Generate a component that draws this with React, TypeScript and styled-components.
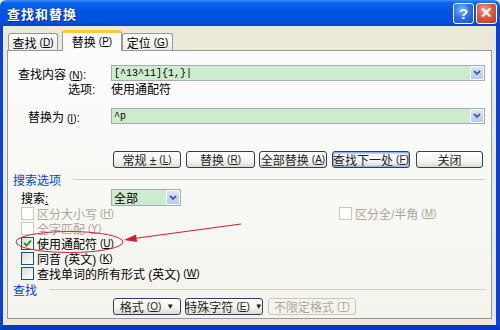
import styled, { createGlobalStyle, css } from "styled-components";

const GlobalStyle = createGlobalStyle`
    html, body {
        margin: 0;
        padding: 0;
        background: #ece9d8;
    }
    body {
        font-family: "Liberation Sans", "Noto Sans CJK SC", sans-serif;
        font-size: 12px;
        color: #000;
    }
    * { box-sizing: border-box; }
`;

const Window = styled.div`
    position: relative;
    width: 500px;
    height: 330px;
    display: flex;
    flex-direction: column;
    background: #ece9d8;
    overflow: hidden;
`;

const TitleBar = styled.div`
    height: 26px;
    display: flex;
    align-items: center;
    padding: 0 3px 0 7px;
    background: linear-gradient(#3d8cf5 0%, #0a62ea 12%, #0054e3 45%, #0050de 85%, #0043c4 100%);
    border-radius: 6px 6px 0 0;
`;

const Title = styled.div`
    flex: 1;
    color: #fff;
    font-weight: bold;
    font-size: 13px;
    letter-spacing: 1px;
    text-shadow: 1px 1px 0 #0a2a8a;
`;

const CaptionButton = styled.div<{ $close?: boolean }>`
    width: 21px;
    height: 21px;
    margin-left: 2px;
    border: 1px solid #fff;
    border-radius: 3px;
    display: flex;
    align-items: center;
    justify-content: center;
    color: #fff;
    font-weight: bold;
    font-size: 15px;
    background: ${p => p.$close
        ? "radial-gradient(circle at 40% 30%, #f0a089 0%, #e0593a 45%, #c1381c 100%)"
        : "radial-gradient(circle at 40% 30%, #7fb1ff 0%, #2f6fea 50%, #1b4fd0 100%)"};
`;

const Frame = styled.div`
    flex: 1;
    display: flex;
    flex-direction: column;
    border-left: 3px solid #0842d8;
    border-right: 4px solid #0842d8;
    border-bottom: 5px solid #0838c0;
    padding: 4px 4px 6px 4px;
`;

const TabStrip = styled.div`
    height: 20px;
    display: flex;
    align-items: flex-end;
    padding-left: 1px;
    position: relative;
    z-index: 1;
`;

const Tab = styled.div<{ $active?: boolean; $w: number }>`
    width: ${p => p.$w}px;
    height: 17px;
    display: flex;
    align-items: center;
    justify-content: center;
    border: 1px solid #919b9c;
    border-bottom: none;
    border-radius: 3px 3px 0 0;
    background: linear-gradient(#fefefe, #ecebe6);
    ${p => p.$active && css`
        height: 21px;
        margin-bottom: -1px;
        margin-left: 4px;
        border-top: 3px solid #ffc83c;
        background: #fcfcfe;
        padding-bottom: 1px;
    `}
`;

const Panel = styled.div`
    flex: 1;
    border: 1px solid #919b9c;
    background: linear-gradient(#fcfcfe 0%, #f9f9f6 40%, #f4f3ee 100%);
    padding: 14px 6px 0 10px;
    display: flex;
    flex-direction: column;
`;

const FieldRow = styled.div<{ $top?: number; $h: number }>`
    display: flex;
    align-items: center;
    height: ${p => p.$h}px;
    margin-top: ${p => p.$top ?? 0}px;
`;

const Label = styled.div<{ $indent?: number }>`
    width: 93px;
    padding-left: ${p => p.$indent ?? 0}px;
    white-space: nowrap;
`;

const Combo = styled.div<{ $w?: number; $h?: number }>`
    ${p => (p.$w ? `width: ${p.$w}px;` : "flex: 1;")}
    height: ${p => p.$h ?? 16}px;
    border: 1px solid #a5acb5;
    background: #cdeccd;
    display: flex;
    align-items: center;
    padding-left: 2px;
`;

const ComboText = styled.div<{ $mono?: boolean }>`
    flex: 1;
    white-space: nowrap;
    ${p => p.$mono && css`
        font-family: "Liberation Mono", monospace;
        font-size: 10px;
    `}
`;

const DropButton = styled.div`
    width: 14px;
    height: 100%;
    border: 1px solid #fff;
    border-radius: 2px;
    background: linear-gradient(#d8e4fc, #b5c9f5);
    display: flex;
    align-items: center;
    justify-content: center;
`;

const ButtonRow = styled.div<{ $top: number }>`
    display: flex;
    margin-top: ${p => p.$top}px;
    margin-left: 95px;
    height: 17px;
`;

const Button = styled.div<{ $w: number; $gap?: number; $focus?: boolean; $disabled?: boolean }>`
    width: ${p => p.$w}px;
    height: 17px;
    margin-left: ${p => p.$gap ?? 0}px;
    border: 1px solid #2b3f5e;
    border-radius: 3px;
    background: linear-gradient(#ffffff 0%, #f4f4f0 60%, #dcdad0 100%);
    display: flex;
    align-items: center;
    justify-content: center;
    white-space: nowrap;
    color: #222;
    ${p => p.$focus && css`
        box-shadow: inset 0 0 0 1px #90b4f0, inset 0 0 0 2px #c2d6f8;
    `}
    ${p => p.$disabled && css`
        border-color: #c9c7ba;
        color: #aca899;
        background: #f5f4ea;
    `}
`;

const Arrow = styled.span`
    font-size: 8px;
    margin-left: 5px;
`;

const SectionHead = styled.div<{ $top: number }>`
    display: flex;
    align-items: center;
    height: 14px;
    margin-top: ${p => p.$top}px;
    margin-left: -5px;
    color: #0046d5;
    &::after {
        content: "";
        flex: 1;
        height: 1px;
        margin-left: 12px;
        background: #d0d0bf;
    }
`;

const CheckGrid = styled.div`
    display: grid;
    grid-template-columns: 318px 1fr;
    margin-left: 3px;
`;

const CheckRow = styled.div<{ $disabled?: boolean }>`
    display: flex;
    align-items: center;
    height: 15px;
    white-space: nowrap;
    color: ${p => (p.$disabled ? "#aca899" : "#000")};
`;

const Box = styled.div<{ $disabled?: boolean }>`
    width: 13px;
    height: 13px;
    margin-right: 3px;
    border: 1px solid ${p => (p.$disabled ? "#cac8bb" : "#1c5180")};
    background: ${p => (p.$disabled ? "#fff" : "linear-gradient(135deg, #dcdcd7, #fff)")};
    display: flex;
    align-items: center;
    justify-content: center;
`;

const Key = styled.span`
    font-size: 10px;
    margin-left: 3px;
    u { text-decoration: underline; }
`;

const Overlay = styled.svg`
    position: absolute;
    left: 0;
    top: 0;
    pointer-events: none;
`;

function K({ k }: { k: string }) {
    return <Key>(<u>{k}</u>)</Key>;
}

function Chevron() {
    return (
        <svg width="8" height="6" viewBox="0 0 8 6">
            <path d="M1 1 L4 4 L7 1" fill="none" stroke="#4d6185" strokeWidth="1.8" />
        </svg>
    );
}

function Check({ label, k, checked, disabled }: { label: string; k: string; checked?: boolean; disabled?: boolean }) {
    return (
        <CheckRow $disabled={disabled}>
            <Box $disabled={disabled}>
                {checked && (
                    <svg width="9" height="9" viewBox="0 0 9 9">
                        <path d="M1 4 L3.5 6.5 L8 1.5" fill="none" stroke="#21a121" strokeWidth="2" />
                    </svg>
                )}
            </Box>
            {label}<K k={k} />
        </CheckRow>
    );
}

const options = [
    { label: "区分大小写", k: "H", disabled: true },
    { label: "全字匹配", k: "Y", disabled: true },
    { label: "使用通配符", k: "U", checked: true },
    { label: "同音 (英文)", k: "K" },
    { label: "查找单词的所有形式 (英文)", k: "W" },
];

function App() {
    return (
        <>
            <GlobalStyle />
            <Window>
                <TitleBar>
                    <Title>查找和替换</Title>
                    <CaptionButton>?</CaptionButton>
                    <CaptionButton $close>✕</CaptionButton>
                </TitleBar>
                <Frame>
                    <TabStrip>
                        <Tab $w={50}>查找<K k="D" /></Tab>
                        <Tab $w={60} $active>替换<K k="P" /></Tab>
                        <Tab $w={51}>定位<K k="G" /></Tab>
                    </TabStrip>
                    <Panel>
                        <FieldRow $h={16}>
                            <Label>查找内容<K k="N" />:</Label>
                            <Combo>
                                <ComboText $mono>[^13^11]{"{1,}"}|</ComboText>
                                <DropButton><Chevron /></DropButton>
                            </Combo>
                        </FieldRow>
                        <FieldRow $h={14}>
                            <Label $indent={50}>选项:</Label>
                            <span>使用通配符</span>
                        </FieldRow>
                        <FieldRow $h={16} $top={13}>
                            <Label $indent={10}>替换为<K k="I" />:</Label>
                            <Combo>
                                <ComboText $mono>^p</ComboText>
                                <DropButton><Chevron /></DropButton>
                            </Combo>
                        </FieldRow>
                        <ButtonRow $top={27}>
                            <Button $w={68}>常规 ± <K k="L" /></Button>
                            <Button $w={69} $gap={5}>替换<K k="R" /></Button>
                            <Button $w={68} $gap={4}>全部替换<K k="A" /></Button>
                            <Button $w={78} $gap={5} $focus>查找下一处<K k="F" /></Button>
                            <Button $w={67} $gap={6}>关闭</Button>
                        </ButtonRow>
                        <SectionHead $top={4}>搜索选项</SectionHead>
                        <FieldRow $h={17} $top={3}>
                            <Label $indent={3}>搜索<u>:</u></Label>
                            <Combo $w={70} $h={17}>
                                <ComboText>全部</ComboText>
                                <DropButton><Chevron /></DropButton>
                            </Combo>
                        </FieldRow>
                        <CheckGrid>
                            <div>
                                {options.map(o => (
                                    <Check key={o.k} label={o.label} k={o.k} checked={o.checked} disabled={o.disabled} />
                                ))}
                            </div>
                            <div>
                                <Check label="区分全/半角" k="M" disabled />
                            </div>
                        </CheckGrid>
                        <SectionHead $top={1}>查找</SectionHead>
                        <ButtonRow $top={2}>
                            <Button $w={68}>格式<K k="O" /><Arrow>▼</Arrow></Button>
                            <Button $w={78} $gap={4}>特殊字符<K k="E" /><Arrow>▼</Arrow></Button>
                            <Button $w={88} $gap={5} $disabled>不限定格式<K k="T" /></Button>
                        </ButtonRow>
                    </Panel>
                </Frame>
                <Overlay width="500" height="330" viewBox="0 0 500 330">
                    <ellipse cx="69.5" cy="242" rx="53.5" ry="10.5" fill="none" stroke="#c8283a" strokeWidth="1" />
                    <line x1="241" y1="224" x2="134" y2="238.5" stroke="#d0202a" strokeWidth="1.2" />
                    <path d="M124 240 L136 234.5 L137 242 Z" fill="#d0202a" />
                </Overlay>
            </Window>
        </>
    );
}

export default App;
